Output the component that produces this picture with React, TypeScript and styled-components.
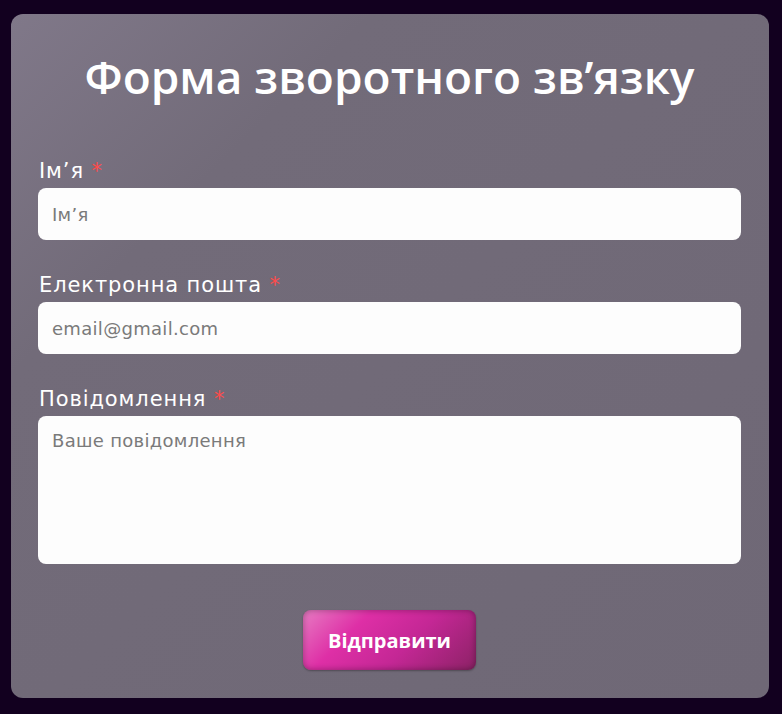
import React, { useState } from 'react';
import styled, { createGlobalStyle } from 'styled-components';

const GlobalStyle = createGlobalStyle`
  html, body {
    margin: 0;
    padding: 0;
    background: #12001f;
  }
  * {
    box-sizing: border-box;
  }
`;

const Page = styled.div`
  padding: 14px 13px 16px 11px;
`;

const Card = styled.div`
  width: 758px;
  min-height: 684px;
  background: linear-gradient(135deg, #807889 0%, #726b79 25%, #6f6876 100%);
  border-radius: 12px;
  padding: 26px 28px 28px 27px;
`;

const Title = styled.h1`
  margin: 0 0 48px;
  text-align: center;
  font-family: 'Open Sans', sans-serif;
  font-weight: 600;
  font-size: 46px;
  line-height: 72px;
  color: #ffffff;
`;

const Form = styled.form`
  display: flex;
  flex-direction: column;
`;

const Field = styled.div`
  display: flex;
  flex-direction: column;
  gap: 6px;
  margin-bottom: 34px;
`;

const Label = styled.label`
  font-family: 'DejaVu Sans', sans-serif;
  font-size: 21px;
  line-height: 22px;
  letter-spacing: 0.9px;
  color: #ffffff;
  padding-left: 1px;

  span {
    color: #ff4a4a;
  }
`;

const inputBase = `
  width: 100%;
  border: none;
  border-radius: 8px;
  background: #fdfdfd;
  font-family: 'DejaVu Sans', sans-serif;
  font-size: 18px;
  letter-spacing: 0.3px;
  color: #333;
  padding: 0 14px;
  outline: none;

  &::placeholder {
    color: #7a7a7a;
  }
`;

const Input = styled.input`
  ${inputBase}
  height: 52px;
`;

const TextArea = styled.textarea`
  ${inputBase}
  height: 148px;
  padding-top: 14px;
  resize: none;
`;

const Actions = styled.div`
  display: flex;
  justify-content: center;
  margin-top: 12px;
`;

const SubmitButton = styled.button`
  width: 173px;
  height: 60px;
  border: none;
  border-radius: 8px;
  background: linear-gradient(135deg, #e77cc3 0%, #de2fa6 30%, #c42795 60%, #8c2266 100%);
  box-shadow: inset 0 0 6px rgba(0, 0, 0, 0.35), 0 1px 2px rgba(0, 0, 0, 0.3);
  color: #ffffff;
  font-family: 'Open Sans', sans-serif;
  font-weight: 700;
  font-size: 20px;
  cursor: pointer;
`;

const App: React.FC = () => {
  const [form, setForm] = useState({ name: '', email: '', message: '' });

  return (
    <Page>
      <GlobalStyle />
      <Card>
        <Title>Форма зворотного зв’язку</Title>
        <Form onSubmit={(e) => e.preventDefault()}>
          <Field>
            <Label>
              Ім’я <span>*</span>
            </Label>
            <Input
              placeholder="Ім’я"
              value={form.name}
              onChange={(e) => setForm((p) => ({ ...p, name: e.target.value }))}
            />
          </Field>
          <Field>
            <Label>
              Електронна пошта <span>*</span>
            </Label>
            <Input
              type="email"
              placeholder="email@gmail.com"
              value={form.email}
              onChange={(e) => setForm((p) => ({ ...p, email: e.target.value }))}
            />
          </Field>
          <Field>
            <Label>
              Повідомлення <span>*</span>
            </Label>
            <TextArea
              placeholder="Ваше повідомлення"
              value={form.message}
              onChange={(e) => setForm((p) => ({ ...p, message: e.target.value }))}
            />
          </Field>
          <Actions>
            <SubmitButton type="submit">Відправити</SubmitButton>
          </Actions>
        </Form>
      </Card>
    </Page>
  );
};

export default App;
